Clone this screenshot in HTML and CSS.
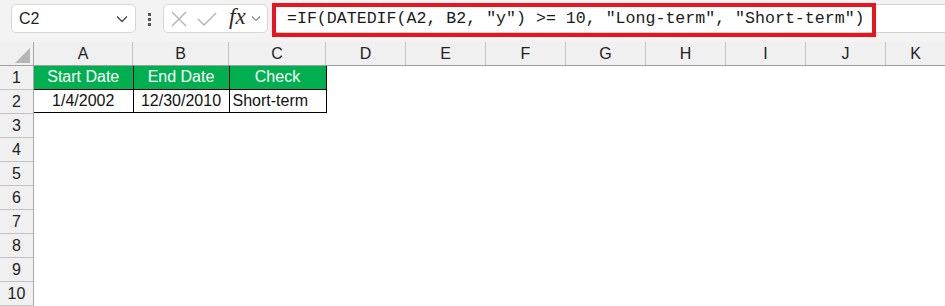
FILE: index.html
```html
<!DOCTYPE html>
<html lang="en">
<head>
    <meta charset="UTF-8">
    <meta name="viewport" content="width=device-width, initial-scale=1.0">
    <title>DATEDIF check</title>
    <link rel="stylesheet" href="styles.css">
</head>
<body>

<div class="toolbar">
    <div class="name-box">
        <span class="name-text">C2</span>
        <svg class="chevron" width="12" height="8" viewBox="0 0 12 8"><path d="M1 1.5 L6 6.5 L11 1.5" fill="none" stroke="#444" stroke-width="1.3"/></svg>
    </div>
    <div class="grip">
        <span></span><span></span><span></span>
    </div>
    <div class="fx-box">
        <svg class="fx-icon" width="18" height="18" viewBox="0 0 18 18"><path d="M2 2 L16 16 M16 2 L2 16" fill="none" stroke="#b3b3b3" stroke-width="1.4"/></svg>
        <svg class="fx-icon" width="20" height="16" viewBox="0 0 20 16"><path d="M1 8 L7 14 L19 2" fill="none" stroke="#b3b3b3" stroke-width="1.4"/></svg>
        <span class="fx-text">fx</span>
        <svg class="fx-chevron" width="10" height="7" viewBox="0 0 10 7"><path d="M1 1.5 L5 5.5 L9 1.5" fill="none" stroke="#888" stroke-width="1.2"/></svg>
    </div>
    <div class="formula-bar">
        <span class="formula-text">=IF(DATEDIF(A2, B2, "y") &gt;= 10, "Long-term", "Short-term")</span>
        <div class="highlight"></div>
    </div>
</div>

<div class="sheet">
    <div class="col-heads">
        <div class="corner"><span class="corner-mark"></span></div>
        <div class="col-head col-a">A</div>
        <div class="col-head col-b">B</div>
        <div class="col-head col-c">C</div>
        <div class="col-head">D</div>
        <div class="col-head">E</div>
        <div class="col-head">F</div>
        <div class="col-head">G</div>
        <div class="col-head">H</div>
        <div class="col-head">I</div>
        <div class="col-head">J</div>
        <div class="col-head col-last">K</div>
    </div>
    <div class="sheet-body">
        <div class="row-heads">
            <div class="row-head">1</div>
            <div class="row-head">2</div>
            <div class="row-head">3</div>
            <div class="row-head">4</div>
            <div class="row-head">5</div>
            <div class="row-head">6</div>
            <div class="row-head">7</div>
            <div class="row-head">8</div>
            <div class="row-head">9</div>
            <div class="row-head">10</div>
        </div>
        <table class="data">
            <tr class="head-row">
                <td class="col-a">Start Date</td>
                <td class="col-b">End Date</td>
                <td class="col-c">Check</td>
            </tr>
            <tr>
                <td class="col-a">1/4/2002</td>
                <td class="col-b">12/30/2010</td>
                <td class="col-c text-left">Short-term</td>
            </tr>
        </table>
    </div>
</div>

</body>
</html>
```

FILE: styles.css
```css
body {
    margin: 0;
    padding: 0;
    background-color: #fff;
    font-family: "Liberation Sans", Arial, sans-serif;
    color: #111;
    width: 945px;
    height: 306px;
    overflow: hidden;
}

/* Top toolbar with name box and formula bar */
.toolbar {
    height: 42px;
    background-color: #f3f3f3;
    display: flex;
    align-items: flex-start;
    box-sizing: border-box;
    padding-top: 4px;
}

.name-box {
    margin-left: 11px;
    width: 125px;
    height: 29px;
    box-sizing: border-box;
    background-color: #fff;
    border: 1px solid #d6d6d6;
    border-radius: 5px;
    display: flex;
    align-items: center;
    justify-content: space-between;
    padding: 0 7px 0 7px;
}

.name-text {
    font-size: 16px;
    color: #222;
}

.grip {
    width: 27px;
    display: flex;
    flex-direction: column;
    align-items: center;
    gap: 2px;
    padding-top: 9px;
}

.grip span {
    width: 3px;
    height: 3px;
    background-color: #555;
}

.fx-box {
    width: 105px;
    height: 29px;
    box-sizing: border-box;
    background-color: #fff;
    border: 1px solid #d6d6d6;
    border-radius: 5px;
    display: flex;
    align-items: center;
    padding-left: 6px;
    gap: 9px;
}

.fx-text {
    font-family: "Liberation Serif", "DejaVu Serif", serif;
    font-style: italic;
    font-size: 23px;
    color: #2a2a2a;
    margin-left: 3px;
    margin-right: -4px;
    margin-top: -3px;
}

.formula-bar {
    position: relative;
    flex: 1;
    height: 29px;
    margin-left: 4px;
    box-sizing: border-box;
    background-color: #fff;
    border-top: 1px solid #d0d0d0;
    border-bottom: 1px solid #d0d0d0;
    display: flex;
    align-items: center;
    padding-left: 15px;
}

.formula-text {
    font-family: "Liberation Mono", "DejaVu Sans Mono", monospace;
    font-size: 16.6px;
    color: #1a1a1a;
    white-space: pre;
}

/* Red annotation frame drawn over the formula bar */
.highlight {
    position: absolute;
    left: 0;
    top: -2px;
    width: 604px;
    height: 34px;
    box-sizing: border-box;
    border: 4px solid #e8141e;
}

/* Sheet grid */
.sheet {
    display: flex;
    flex-direction: column;
}

.col-heads {
    display: flex;
    height: 24px;
    background-color: #f0f0f0;
    border-bottom: 1px solid #a0a0a0;
    box-sizing: border-box;
}

.corner {
    position: relative;
    width: 34px;
    flex-shrink: 0;
    border-right: 1px solid #a8a8a8;
    box-sizing: border-box;
}

.corner-mark {
    position: absolute;
    right: 3px;
    bottom: 2px;
    width: 0;
    height: 0;
    border-left: 15px solid transparent;
    border-bottom: 15px solid #b5b5b5;
}

.col-head {
    width: 80px;
    flex-shrink: 0;
    box-sizing: border-box;
    border-right: 1px solid #c2c2c2;
    font-size: 16px;
    color: #222;
    display: flex;
    align-items: center;
    justify-content: center;
    padding-top: 1px;
}

.col-a { width: 99px; }
.col-b { width: 96px; }
.col-c { width: 97px; }
.col-last { flex: 1; border-right: none; }

.sheet-body {
    display: flex;
    align-items: flex-start;
}

.row-heads {
    width: 34px;
    flex-shrink: 0;
    background-color: #f0f0f0;
    border-right: 1px solid #a8a8a8;
    box-sizing: border-box;
}

.row-head {
    height: 24px;
    box-sizing: border-box;
    border-bottom: 1px solid #c2c2c2;
    font-size: 16px;
    color: #222;
    display: flex;
    align-items: center;
    justify-content: center;
}

.data {
    border-collapse: collapse;
    table-layout: fixed;
}

.data td {
    height: 23px;
    padding: 0 3px;
    box-sizing: border-box;
    border-right: 1px solid #000;
    border-bottom: 1px solid #000;
    font-size: 16px;
    text-align: center;
    white-space: nowrap;
    overflow: hidden;
}

.head-row td {
    background-color: #00b050;
    color: #fff;
}

.data td.text-left {
    text-align: left;
}
```
